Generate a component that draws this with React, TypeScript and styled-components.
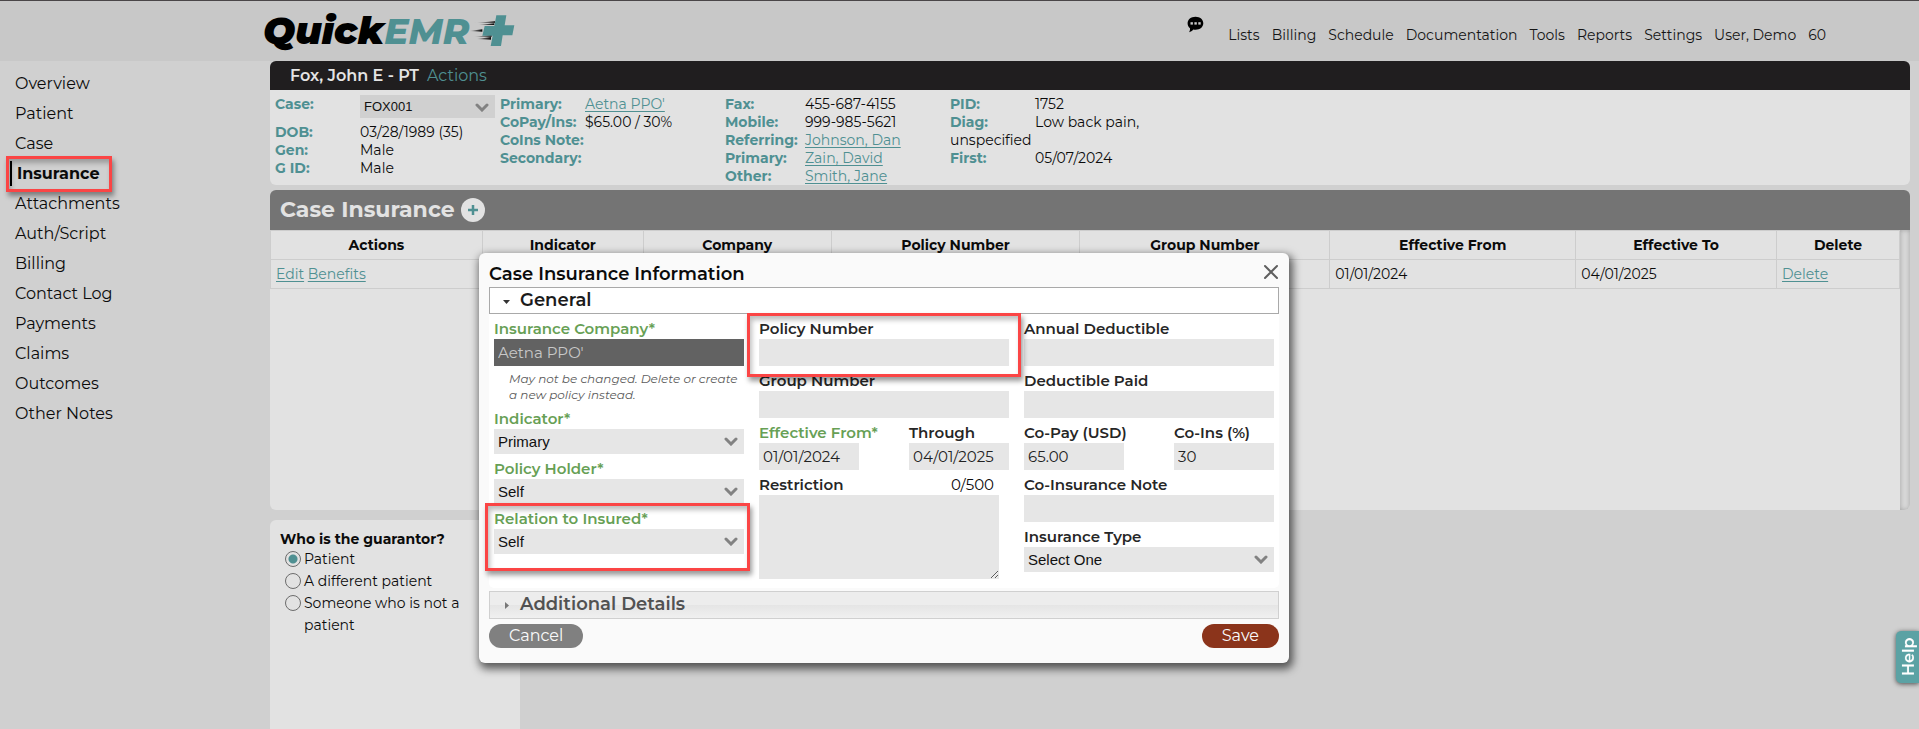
import React, { useState } from "react";
import styled, { createGlobalStyle, css } from "styled-components";

const teal = "#4f9092";
const alertRed = "#fb4545";
const bodyFont = '"Montserrat", "Inter", sans-serif';
const controlFont = '"Liberation Sans", Arial, sans-serif';

const GlobalStyle = createGlobalStyle`
  *, *::before, *::after { box-sizing: border-box; }
  body {
    margin: 0;
    background: #d0d0d0;
    color: #0b0b0b;
    font-family: ${bodyFont};
    font-size: 15px;
    line-height: 18px;
  }
`;

/* ---------- shared pieces ---------- */

const highlight = css`
  content: "";
  position: absolute;
  border: 3px solid ${alertRed};
  box-shadow: 2px 4px 5px rgba(0, 0, 0, 0.4), inset 2px 4px 5px rgba(0, 0, 0, 0.25);
  pointer-events: none;
  z-index: 2;
`;

const TealLink = styled.a`
  color: ${teal};
  text-decoration: underline;
  text-underline-offset: 2px;
`;

const Chevron = () => (
  <svg width="14" height="9" viewBox="0 0 14 9" aria-hidden="true">
    <path d="M2 2 L7 7 L12 2" fill="none" stroke="#828282" strokeWidth="3" strokeLinecap="round" />
  </svg>
);

const SelectWrap = styled.span<{ $width?: string }>`
  display: inline-block;
  position: relative;
  width: ${(p) => p.$width ?? "100%"};
  svg {
    position: absolute;
    right: 6px;
    top: 8px;
    pointer-events: none;
  }
`;

const SelectBox = styled.select<{ $compact?: boolean }>`
  display: block;
  appearance: none;
  width: 100%;
  height: ${(p) => (p.$compact ? 23 : 25)}px;
  padding: 0 24px 1px 4px;
  border: 0;
  border-radius: 0;
  background: ${(p) => (p.$compact ? "#d0d0d0" : "#e6e6e6")};
  color: #111;
  font: ${(p) => (p.$compact ? 13 : 15)}px ${controlFont};
`;

/* ---------- page frame ---------- */

const Page = styled.div`
  display: flex;
  flex-direction: column;
  min-height: 100vh;
`;

const Header = styled.header`
  display: flex;
  justify-content: space-between;
  height: 61px;
  padding: 0 93px 0 263px;
  border-top: 1px solid #4a4648;
  background: #c8c8c8;
`;

const Logo = styled.a`
  display: flex;
  align-items: center;
  font-size: 38px;
  font-weight: 900;
  font-style: italic;
  line-height: 56px;
  color: #000;
  text-decoration: none;
`;

const LogoAccent = styled.span`
  color: ${teal};
  font-size: 36px;
  font-weight: 800;
`;

const TopNav = styled.nav`
  display: flex;
  gap: 12px;
  padding-top: 25px;
  font-size: 14px;
  a {
    color: #151515;
    text-decoration: none;
  }
`;

const ChatButton = styled.button`
  align-self: flex-start;
  margin: -10px 12px 0 0;
  padding: 0;
  border: 0;
  background: none;
  line-height: 0;
`;

const Columns = styled.div`
  display: flex;
  flex: 1;
`;

const Sidebar = styled.nav`
  flex: 0 0 270px;
  padding: 8px 0 0 15px;
`;

const SideLink = styled.a<{ $active?: boolean }>`
  display: block;
  position: relative;
  width: max-content;
  font-size: 16px;
  line-height: 30px;
  color: #0b0b0b;
  text-decoration: none;
  ${(p) =>
    p.$active &&
    css`
      padding-left: 2px;
      font-weight: 700;
      &::before {
        content: "";
        position: absolute;
        left: -5px;
        top: 2px;
        width: 2px;
        height: 25px;
        background: #000;
      }
      &::after {
        ${highlight}
        inset: -3px -12px -3px -9px;
      }
    `}
`;

const Main = styled.main`
  display: flex;
  flex: 1;
  flex-direction: column;
  min-width: 0;
  padding-right: 9px;
`;

/* ---------- patient banner ---------- */

const PatientBar = styled.div`
  display: flex;
  gap: 8px;
  height: 29px;
  padding-left: 20px;
  border-radius: 6px 6px 0 0;
  background: #201e1f;
  color: #e4e4e4;
  font-size: 16px;
  line-height: 29px;
  a {
    color: ${teal};
    text-decoration: none;
  }
`;

const PatientName = styled.strong`
  font-weight: 600;
`;

const PatientInfo = styled.div`
  display: flex;
  height: 95px;
  padding: 5px;
  border-radius: 0 0 6px 6px;
  background: #e2e2e2;
`;

const InfoColumn = styled.div`
  flex: 0 0 225px;
`;

const InfoLine = styled.div<{ $tall?: boolean }>`
  min-height: ${(p) => (p.$tall ? 28 : 18)}px;
`;

const InfoKey = styled.label<{ $width: number }>`
  display: inline-block;
  width: ${(p) => p.$width}px;
  color: ${teal};
  font-size: 14px;
  font-weight: 700;
  vertical-align: top;
`;

const InfoValue = styled.span`
  font-size: 14px;
`;

/* ---------- case insurance table ---------- */

const Section = styled.section`
  margin-top: 5px;
`;

const SectionBar = styled.div`
  display: flex;
  align-items: center;
  gap: 6px;
  height: 40px;
  padding-left: 10px;
  border-radius: 6px 6px 0 0;
  background: #747474;
`;

const SectionTitle = styled.h2`
  margin: 0;
  color: #e2e2e2;
  font-size: 22px;
  font-weight: 700;
  line-height: 40px;
`;

const AddButton = styled.button`
  width: 24px;
  height: 24px;
  padding: 0;
  border: 0;
  border-radius: 50%;
  background: #e2e2e2;
  line-height: 0;
`;

const TablePane = styled.div`
  display: flex;
  height: 280px;
  border-radius: 0 0 6px 6px;
  overflow: hidden;
  background: #e2e2e2;
`;

const ScrollTrack = styled.div`
  flex: 0 0 10px;
  background: #d8d8d8;
  box-shadow: inset 0 0 5px rgba(0, 0, 0, 0.25);
`;

const TableArea = styled.div`
  flex: 1;
`;

const Table = styled.table`
  width: 100%;
  table-layout: fixed;
  border-collapse: collapse;
  th, td {
    height: 29px;
    padding: 0 5px;
    border: 1px solid #cdcdcd;
    font-size: 14px;
  }
  th { font-weight: 700; }
  td { text-align: left; }
`;

/* ---------- guarantor ---------- */

const Guarantor = styled.fieldset`
  flex: 1;
  width: 250px;
  min-height: 209px;
  margin: 10px 0 0;
  padding: 9px 10px 0;
  border: 0;
  border-radius: 6px 6px 0 0;
  background: #e2e2e2;
  font-size: 14px;
  line-height: 22px;
`;

const GuarantorTitle = styled.legend`
  float: left;
  width: 100%;
  height: 19px;
  padding: 0;
  font-weight: 700;
  line-height: 21px;
`;

const RadioRow = styled.label`
  display: flex;
  clear: both;
  gap: 3px;
  padding-left: 5px;
`;

const Radio = styled.input`
  appearance: none;
  flex: 0 0 16px;
  height: 16px;
  margin: 3px 0 0;
  border: 1px solid #6c6c6c;
  border-radius: 50%;
  &:checked {
    background: radial-gradient(circle, ${teal} 4px, transparent 5px);
  }
`;

/* ---------- dialog ---------- */

const Dialog = styled.section`
  position: absolute;
  left: 479px;
  top: 253px;
  width: 810px;
  padding: 8px 10px 15px;
  border-radius: 6px;
  background: #fafafa;
  box-shadow: 2px 4px 9px 2px rgba(0, 0, 0, 0.6);
`;

const DialogHead = styled.div`
  display: flex;
  justify-content: space-between;
  align-items: flex-start;
  height: 26px;
`;

const DialogTitle = styled.h2`
  margin: 0;
  font-size: 18px;
  font-weight: 600;
  line-height: 26px;
`;

const CloseButton = styled.button`
  margin-top: 3px;
  padding: 0;
  border: 0;
  background: none;
  line-height: 0;
`;

const AccordionBar = styled.button<{ $open?: boolean }>`
  display: flex;
  align-items: center;
  gap: 9px;
  width: 100%;
  height: ${(p) => (p.$open ? 27 : 28)}px;
  padding: 0 12px 2px;
  border: 1px solid ${(p) => (p.$open ? "#a9a9a9" : "#d0d0d0")};
  background: ${(p) => (p.$open ? "#fff" : "linear-gradient(#ededed 50%, #e5e5e5 50%, #f0f0f0)")};
  color: ${(p) => (p.$open ? "#1b1b1b" : "#525252")};
  font-family: ${bodyFont};
  font-size: 18px;
  font-weight: 600;
  line-height: 20px;
  text-align: left;
  svg { margin-top: 3px; }
`;

const FormPanel = styled.div`
  display: grid;
  grid-template-columns: repeat(3, 1fr);
  gap: 15px;
  padding: 0 5px 9px;
  margin-bottom: 3px;
  border-radius: 0 0 5px 5px;
  background: #fff;
`;

const FieldBox = styled.div<{ $flag?: "policy" | "relation" }>`
  position: relative;
  &::after {
    ${(p) => p.$flag && highlight}
    ${(p) => p.$flag === "policy" && "inset: -1px -12px -11px -12px;"}
    ${(p) => p.$flag === "relation" && "inset: -1px -6px -17px -9px;"}
  }
`;

const FieldHead = styled.div`
  display: flex;
  justify-content: space-between;
  height: 25px;
  padding-right: 15px;
  line-height: 29px;
  white-space: nowrap;
`;

const FieldLabel = styled.label<{ $required?: boolean }>`
  color: ${(p) => (p.$required ? "#67a055" : "#262626")};
  font-weight: 600;
`;

const TextInput = styled.input`
  display: block;
  width: 100%;
  height: 27px;
  padding: 0 4px;
  border: 0;
  border-radius: 0;
  background: #e6e6e6;
  color: #222;
  font: 15px ${bodyFont};
  &:disabled {
    background: #626262;
    color: #c8c8c8;
  }
`;

const NoteArea = styled.textarea`
  display: block;
  width: 240px;
  height: 84px;
  border: 0;
  background: #e6e6e6;
  font: 15px ${bodyFont};
  resize: both;
`;

const Hint = styled.p`
  margin: 0;
  padding: 5px 0 1px 15px;
  color: #5c5c5c;
  font-size: 12px;
  font-style: italic;
  line-height: 16px;
`;

const FieldPair = styled.div`
  display: grid;
  grid-template-columns: 100px 100px;
  justify-content: space-between;
`;

const DialogFoot = styled.div`
  display: flex;
  justify-content: space-between;
  padding-top: 5px;
`;

const Pill = styled.button<{ $primary?: boolean }>`
  height: 24px;
  padding: 0 20px;
  border: 0;
  border-radius: 12px;
  background: ${(p) => (p.$primary ? "#8b341b" : "#808080")};
  color: #fafafa;
  font-family: ${bodyFont};
  font-size: 16px;
  line-height: 22px;
`;

const HelpTab = styled.button`
  position: fixed;
  right: 0;
  top: 631px;
  width: 23px;
  height: 52px;
  padding: 0;
  border: 0;
  border-radius: 0 5px 5px 0;
  transform: rotate(180deg);
  writing-mode: vertical-rl;
  background: #5ba2a4;
  box-shadow: 0 -1px 5px rgba(0, 0, 0, 0.65);
  color: #fff;
  font-family: ${bodyFont};
  font-size: 16px;
  font-weight: 600;
  line-height: 26px;
`;

/* ---------- data ---------- */

const topLinks = ["Lists", "Billing", "Schedule", "Documentation", "Tools", "Reports", "Settings", "User, Demo", "60"];

const sideLinks = [
  "Overview", "Patient", "Case", "Insurance", "Attachments", "Auth/Script",
  "Billing", "Contact Log", "Payments", "Claims", "Outcomes", "Other Notes",
];

const tableColumns: [string, number][] = [
  ["Actions", 212], ["Indicator", 161], ["Company", 188], ["Policy Number", 249],
  ["Group Number", 250], ["Effective From", 246], ["Effective To", 201], ["Delete", 123],
];

const guarantors = ["Patient", "A different patient", "Someone who is not a patient"];

type Info = { label: string; value?: string; link?: boolean };

const infoColumns: { keyWidth: number; lines: Info[] }[] = [
  {
    keyWidth: 85,
    lines: [
      { label: "Primary:", value: "Aetna PPO'", link: true },
      { label: "CoPay/Ins:", value: "$65.00 / 30%" },
      { label: "CoIns Note:" },
      { label: "Secondary:" },
    ],
  },
  {
    keyWidth: 80,
    lines: [
      { label: "Fax:", value: "455-687-4155" },
      { label: "Mobile:", value: "999-985-5621" },
      { label: "Referring:", value: "Johnson, Dan", link: true },
      { label: "Primary:", value: "Zain, David", link: true },
      { label: "Other:", value: "Smith, Jane", link: true },
    ],
  },
  {
    keyWidth: 85,
    lines: [
      { label: "PID:", value: "1752" },
      { label: "Diag:", value: "Low back pain, unspecified" },
      { label: "First:", value: "05/07/2024" },
    ],
  },
];

/* ---------- components ---------- */

const InfoRow = ({ info, width }: { info: Info; width: number }) => (
  <InfoLine>
    <InfoKey as="span" $width={width}>{info.label}</InfoKey>
    {info.value && (
      <InfoValue>{info.link ? <TealLink href="#">{info.value}</TealLink> : info.value}</InfoValue>
    )}
  </InfoLine>
);

type FieldProps = {
  id: string;
  label: string;
  required?: boolean;
  value?: string;
  options?: boolean;
  disabled?: boolean;
  flag?: "policy" | "relation";
};

const Field = ({ id, label, required, value, options, disabled, flag }: FieldProps) => (
  <FieldBox $flag={flag}>
    <FieldHead>
      <FieldLabel htmlFor={id} $required={required}>{label}{required && "*"}</FieldLabel>
    </FieldHead>
    {options ? (
      <SelectWrap>
        <SelectBox id={id}><option>{value}</option></SelectBox>
        <Chevron />
      </SelectWrap>
    ) : (
      <TextInput id={id} defaultValue={value} disabled={disabled} />
    )}
  </FieldBox>
);

const SpeedPlus = () => (
  <svg width="46" height="32" viewBox="0 0 138 96" aria-hidden="true">
    <defs>
      <linearGradient id="streak" x1="0" x2="1" y1="0" y2="0">
        <stop offset="0" stopColor="#000" stopOpacity="0" />
        <stop offset="1" stopColor="#000" />
      </linearGradient>
    </defs>
    <path d="M14 24 L78 19 V23 H14 Z M30 30 L76 25 V30 Z" fill="url(#streak)" />
    <path d="M0 48 L40 43 V50 Z" fill="url(#streak)" />
    <path d="M14 65 L68 60 V65 Z M24 72 L66 66 V74 Z" fill="url(#streak)" />
    <path
      d="M82 1 H112 L107 31 H136 L130 61 H101 L96 93 H65 L71 62 H40 L47 33 H76 Z"
      fill={teal}
    />
  </svg>
);

const ChatIcon = () => (
  <svg width="17" height="17" viewBox="0 0 17 17" aria-hidden="true">
    <path d="M8.500 .8 C13 .8 16.300 3.600 16.300 7.300 C16.300 11 13 13.800 8.500 13.800 C7.700 13.800 7 13.700 6.300 13.500 C5.200 14.800 3.800 15.800 2 16.200 C2.700 15.200 3.200 13.800 3 12.200 C1.400 11 .6 9.300 .6 7.300 C.6 3.600 4 .8 8.500 .8 Z" fill="#000" />
    <rect x="3.500" y="6.200" width="2.400" height="2.400" fill="#c8c8c8" />
    <rect x="7.400" y="6.200" width="2.400" height="2.400" fill="#c8c8c8" />
    <rect x="11.300" y="6.200" width="2.400" height="2.400" fill="#c8c8c8" />
  </svg>
);

const InsuranceDialog = () => (
  <Dialog role="dialog" aria-labelledby="dialog-title">
    <DialogHead>
      <DialogTitle id="dialog-title">Case Insurance Information</DialogTitle>
      <CloseButton aria-label="Close">
        <svg width="16" height="16" viewBox="0 0 16 16">
          <path d="M2 2 L14 14 M14 2 L2 14" stroke="#5f5f5f" strokeWidth="2" strokeLinecap="round" />
        </svg>
      </CloseButton>
    </DialogHead>
    <AccordionBar $open aria-expanded="true">
      <svg width="9" height="9" viewBox="0 0 9 9"><path d="M1 3 H8 L4.500 7 Z" fill="#333" /></svg>
      General
    </AccordionBar>
    <FormPanel>
      <div>
        <Field id="company" label="Insurance Company" required value="Aetna PPO'" disabled />
        <Hint>May not be changed. Delete or create a new policy instead.</Hint>
        <Field id="indicator" label="Indicator" required options value="Primary" />
        <Field id="holder" label="Policy Holder" required options value="Self" />
        <Field id="relation" label="Relation to Insured" required options value="Self" flag="relation" />
      </div>
      <div>
        <Field id="policy" label="Policy Number" flag="policy" />
        <Field id="group" label="Group Number" />
        <FieldPair>
          <Field id="from" label="Effective From" required value="01/01/2024" />
          <Field id="through" label="Through" value="04/01/2025" />
        </FieldPair>
        <FieldHead>
          <FieldLabel htmlFor="restriction">Restriction</FieldLabel>
          <span>0/500</span>
        </FieldHead>
        <NoteArea id="restriction" />
      </div>
      <div>
        <Field id="deductible" label="Annual Deductible" />
        <Field id="paid" label="Deductible Paid" />
        <FieldPair>
          <Field id="copay" label="Co-Pay (USD)" value="65.00" />
          <Field id="coins" label="Co-Ins (%)" value="30" />
        </FieldPair>
        <Field id="note" label="Co-Insurance Note" />
        <Field id="type" label="Insurance Type" options value="Select One" />
      </div>
    </FormPanel>
    <AccordionBar aria-expanded="false">
      <svg width="9" height="9" viewBox="0 0 9 9"><path d="M3 1 V8 L7 4.500 Z" fill="#777" /></svg>
      Additional Details
    </AccordionBar>
    <DialogFoot>
      <Pill>Cancel</Pill>
      <Pill $primary>Save</Pill>
    </DialogFoot>
  </Dialog>
);

export default function App() {
  const [guarantor, setGuarantor] = useState(guarantors[0]);
  return (
    <Page>
      <GlobalStyle />
      <Header>
        <Logo href="#" aria-label="QuickEMR">
          Quick<LogoAccent>EMR</LogoAccent>
          <SpeedPlus />
        </Logo>
        <TopNav>
          <ChatButton aria-label="Messages"><ChatIcon /></ChatButton>
          {topLinks.map((t) => <a key={t} href="#">{t}</a>)}
        </TopNav>
      </Header>
      <Columns>
        <Sidebar>
          {sideLinks.map((t) => (
            <SideLink key={t} href="#" $active={t === "Insurance"}>{t}</SideLink>
          ))}
        </Sidebar>
        <Main>
          <PatientBar>
            <PatientName>Fox, John E - PT</PatientName>
            <a href="#">Actions</a>
          </PatientBar>
          <PatientInfo>
            <InfoColumn>
              <InfoLine $tall>
                <InfoKey htmlFor="case" $width={85}>Case:</InfoKey>
                <SelectWrap $width="135px">
                  <SelectBox id="case" $compact><option>FOX001</option></SelectBox>
                  <Chevron />
                </SelectWrap>
              </InfoLine>
              <InfoRow width={85} info={{ label: "DOB:", value: "03/28/1989 (35)" }} />
              <InfoRow width={85} info={{ label: "Gen:", value: "Male" }} />
              <InfoRow width={85} info={{ label: "G ID:", value: "Male" }} />
            </InfoColumn>
            {infoColumns.map((col) => (
              <InfoColumn key={col.lines[0].label}>
                {col.lines.map((info) => (
                  <InfoRow key={info.label} info={info} width={col.keyWidth} />
                ))}
              </InfoColumn>
            ))}
          </PatientInfo>
          <Section>
            <SectionBar>
              <SectionTitle>Case Insurance</SectionTitle>
              <AddButton aria-label="Add insurance">
                <svg width="12" height="12" viewBox="0 0 12 12">
                  <path d="M6 1 V11 M1 6 H11" stroke={teal} strokeWidth="2.500" />
                </svg>
              </AddButton>
            </SectionBar>
            <TablePane>
              <TableArea>
                <Table>
                  <colgroup>
                    {tableColumns.map(([name, width]) => (
                      <col key={name} style={{ width: `${(width / 1630) * 100}%` }} />
                    ))}
                  </colgroup>
                  <thead>
                    <tr>{tableColumns.map(([name]) => <th key={name}>{name}</th>)}</tr>
                  </thead>
                  <tbody>
                    <tr>
                      <td><TealLink href="#">Edit</TealLink> <TealLink href="#">Benefits</TealLink></td>
                      <td /><td /><td /><td />
                      <td>01/01/2024</td>
                      <td>04/01/2025</td>
                      <td><TealLink href="#">Delete</TealLink></td>
                    </tr>
                  </tbody>
                </Table>
              </TableArea>
              <ScrollTrack />
            </TablePane>
          </Section>
          <Guarantor>
            <GuarantorTitle>Who is the guarantor?</GuarantorTitle>
            {guarantors.map((g) => (
              <RadioRow key={g}>
                <Radio type="radio" name="guarantor" checked={guarantor === g} onChange={() => setGuarantor(g)} />
                {g}
              </RadioRow>
            ))}
          </Guarantor>
        </Main>
      </Columns>
      <InsuranceDialog />
      <HelpTab>Help</HelpTab>
    </Page>
  );
}
